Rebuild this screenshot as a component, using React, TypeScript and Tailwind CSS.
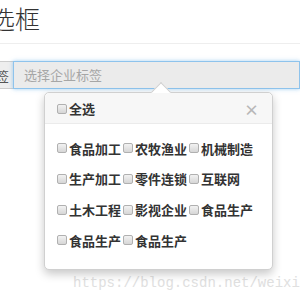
import React, { useState } from 'react';

const tags = [
  '食品加工', '农牧渔业', '机械制造',
  '生产加工', '零件连锁', '互联网',
  '土木工程', '影视企业', '食品生产',
  '食品生产', '食品生产',
];

function Box({ checked, onClick }: { checked: boolean; onClick: () => void }) {
  return (
    <span
      onClick={onClick}
      className={`inline-block w-[10px] h-[10px] rounded-[2px] border border-[#b0b0b0] shrink-0 ${
        checked ? 'bg-[#5b9bd5]' : 'bg-gradient-to-b from-[#f2f2f2] to-[#d6d6d6]'
      }`}
    />
  );
}

export default function App() {
  const [picked, setPicked] = useState<boolean[]>(tags.map(() => false));
  const all = picked.every(Boolean);

  const toggle = (i: number) => setPicked(p => p.map((v, j) => (j === i ? !v : v)));

  return (
    <div
      className="relative w-[300px] h-[300px] overflow-hidden bg-white text-[#333]"
      style={{ fontFamily: '"Noto Sans CJK SC", "Noto Sans", sans-serif' }}
    >
      <div className="h-[44px] border-b border-[#eee] overflow-hidden">
        <h1 className="ml-[-10px] mt-[-2px] text-[25px] leading-[40px] font-light text-[#333] whitespace-nowrap">
          选框
        </h1>
      </div>

      <div className="mt-[17px] flex h-[28px]">
        <div className="w-[13px] shrink-0 bg-[#eee] border-y border-[#ccc] flex items-center justify-end overflow-hidden">
          <span className="text-[13px] leading-none mr-[4px] text-[#555] whitespace-nowrap">签</span>
        </div>
        <div className="flex-1 bg-[#ebebeb] border border-[#8ec3ec] shadow-[0_0_4px_rgba(102,175,233,0.6)] flex items-center pl-[10px]">
          <span className="text-[13px] text-[#a6a6a6]">选择企业标签</span>
        </div>
      </div>

      <div className="absolute left-[44px] top-[92px] w-[229px] h-[178px] bg-white border border-[#d0d0d0] rounded-[5px] shadow-[0_4px_10px_rgba(0,0,0,0.22)] z-10">
        <div className="absolute left-[109px] top-[-8px] w-[14px] h-[14px] rotate-45 bg-white border-l border-t border-[#cfcfcf]" />
        <div className="relative h-[31px] bg-[#f7f7f7] border-b border-[#ebebeb] rounded-t-[5px] flex items-center justify-between pl-[12px] pr-[13px] pt-[2px]">
          <label className="flex items-center gap-[2px] text-[13px] font-bold">
            <Box checked={all} onClick={() => setPicked(tags.map(() => !all))} />
            全选
          </label>
          <span className="text-[15px] leading-none font-bold text-[#b8b8b8]">×</span>
        </div>
        <div className="grid grid-cols-[66px_66px_66px] auto-rows-[30.7px] pl-[12px] pt-[9px]">
          {tags.map((t, i) => (
            <label key={i} className="flex items-center gap-[2px] text-[13px] font-bold whitespace-nowrap">
              <Box checked={picked[i]} onClick={() => toggle(i)} />
              {t}
            </label>
          ))}
        </div>
      </div>

      <div
        className="absolute left-[73px] top-[273px] text-[14px] text-[#e0e0e0] whitespace-nowrap"
        style={{ fontFamily: '"Liberation Mono", monospace' }}
      >
        https://blog.csdn.net/weixin
      </div>
    </div>
  );
}
